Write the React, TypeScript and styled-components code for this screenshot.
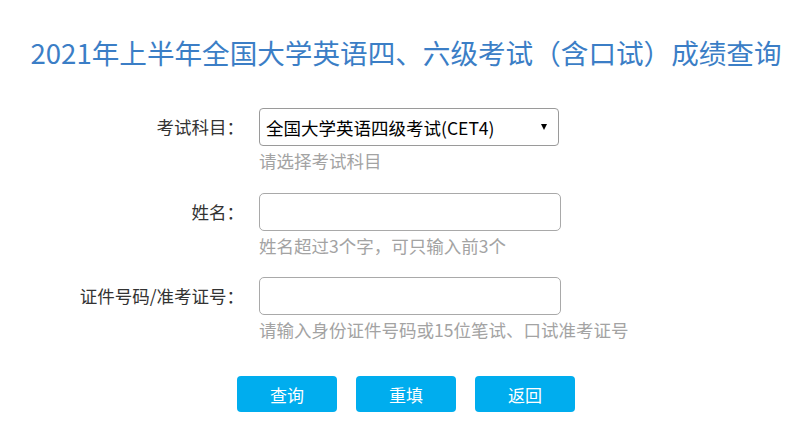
import React from "react";
import styled, { createGlobalStyle } from "styled-components";

const Global = createGlobalStyle`
  html, body { margin: 0; padding: 0; background: #ffffff; }
  body { font-family: "Noto Sans CJK SC", "Noto Sans", sans-serif; color: #333; }
  * { box-sizing: border-box; }
`;

const Page = styled.div`
  width: 808px;
  height: 429px;
  overflow: hidden;
`;

const Title = styled.h1`
  margin: 32px 0 0;
  padding-left: 4px;
  font-size: 27.6px;
  line-height: 40px;
  font-weight: 400;
  color: #3b7ec6;
  text-align: center;
  white-space: nowrap;
`;

const Form = styled.form`
  margin-top: 36px;
  display: flex;
  flex-direction: column;
`;

const Row = styled.div<{ $gap: number }>`
  display: grid;
  grid-template-columns: 244px 380px;
  column-gap: 15px;
  margin-bottom: ${(p) => p.$gap}px;
`;

const Label = styled.label`
  font-size: 17.5px;
  line-height: 38px;
  color: #333;
  text-align: right;
  white-space: nowrap;
`;

const Control = styled.div`
  display: flex;
  flex-direction: column;
`;

const SelectWrap = styled.div`
  position: relative;
  width: 300px;
`;

const Select = styled.select`
  appearance: none;
  -webkit-appearance: none;
  width: 300px;
  height: 38px;
  border: 1px solid #9a9a9a;
  border-radius: 4px;
  background: #fff;
  padding: 0 24px 0 6px;
  font-family: "Noto Sans CJK SC", "Noto Sans", sans-serif;
  font-size: 17.5px;
  color: #000;
  outline: none;
`;

const Arrow = styled.span`
  position: absolute;
  right: 12px;
  top: 50%;
  transform: translateY(-50%);
  width: 0;
  height: 0;
  border-left: 3.5px solid transparent;
  border-right: 3.5px solid transparent;
  border-top: 6px solid #000;
  pointer-events: none;
`;

const Input = styled.input`
  width: 302px;
  height: 38px;
  border: 1px solid #a9a9a9;
  border-radius: 5px;
  background: #fff;
  padding: 0 8px;
  font-family: "Noto Sans CJK SC", "Noto Sans", sans-serif;
  font-size: 17.5px;
  outline: none;
`;

const Hint = styled.div`
  margin-top: 3px;
  font-size: 17.5px;
  line-height: 24px;
  color: #a3a3a3;
  white-space: nowrap;
`;

const Buttons = styled.div`
  margin-top: 34px;
  padding-left: 4px;
  display: flex;
  justify-content: center;
  gap: 19px;
`;

const Button = styled.button`
  width: 100px;
  height: 36px;
  border: none;
  border-radius: 4px;
  background: #00adee;
  color: #fff;
  font-family: "Noto Sans CJK SC", "Noto Sans", sans-serif;
  font-size: 17px;
  cursor: pointer;
`;

export default function App() {
  return (
    <Page>
      <Global />
      <Title>2021年上半年全国大学英语四、六级考试（含口试）成绩查询</Title>
      <Form onSubmit={(e) => e.preventDefault()}>
        <Row $gap={20}>
          <Label>考试科目：</Label>
          <Control>
            <SelectWrap>
              <Select defaultValue="CET4">
                <option value="CET4">全国大学英语四级考试(CET4)</option>
                <option value="CET6">全国大学英语六级考试(CET6)</option>
              </Select>
              <Arrow />
            </SelectWrap>
            <Hint>请选择考试科目</Hint>
          </Control>
        </Row>
        <Row $gap={19}>
          <Label>姓名：</Label>
          <Control>
            <Input type="text" />
            <Hint>姓名超过3个字，可只输入前3个</Hint>
          </Control>
        </Row>
        <Row $gap={0}>
          <Label>证件号码/准考证号：</Label>
          <Control>
            <Input type="text" />
            <Hint>请输入身份证件号码或15位笔试、口试准考证号</Hint>
          </Control>
        </Row>
        <Buttons>
          <Button type="button">查询</Button>
          <Button type="button">重填</Button>
          <Button type="button">返回</Button>
        </Buttons>
      </Form>
    </Page>
  );
}
